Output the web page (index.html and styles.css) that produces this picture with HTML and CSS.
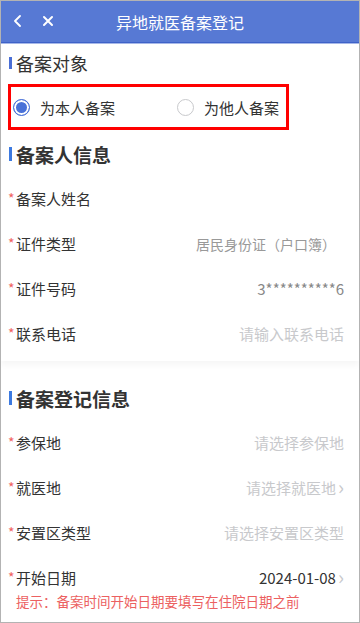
FILE: index.html
```html
<!DOCTYPE html>
<html lang="zh-CN">
<head>
    <meta charset="UTF-8">
    <meta name="viewport" content="width=device-width, initial-scale=1.0">
    <title>异地就医备案登记</title>
    <link rel="stylesheet" href="styles.css">
</head>
<body>
    <div class="page">
        <div class="nav-bar">
            <div class="nav-icons">
                <svg class="nav-icon" width="10" height="12" viewBox="0 0 10 12">
                    <path d="M7 1 L2 6 L7 11" fill="none" stroke="#fff" stroke-width="1.8" stroke-linecap="round" stroke-linejoin="round"/>
                </svg>
                <svg class="nav-icon" width="12" height="12" viewBox="0 0 12 12">
                    <path d="M2 2 L10 10 M10 2 L2 10" fill="none" stroke="#fff" stroke-width="2" stroke-linecap="round"/>
                </svg>
            </div>
            <div class="nav-title">异地就医备案登记</div>
        </div>

        <!-- 备案对象 -->
        <div class="section-title light">备案对象</div>
        <div class="radio-group">
            <label class="radio checked"><span class="radio-dot"></span>为本人备案</label>
            <label class="radio"><span class="radio-dot"></span>为他人备案</label>
        </div>

        <!-- 备案人信息 -->
        <div class="card">
            <div class="section-title">备案人信息</div>
            <div class="row">
                <div class="label"><i>*</i>备案人姓名</div>
                <div class="value"></div>
            </div>
            <div class="row">
                <div class="label"><i>*</i>证件类型</div>
                <div class="value small">居民身份证（户口簿）<span class="arrow hidden">›</span></div>
            </div>
            <div class="row">
                <div class="label"><i>*</i>证件号码</div>
                <div class="value">3**********6</div>
            </div>
            <div class="row">
                <div class="label"><i>*</i>联系电话</div>
                <div class="value placeholder">请输入联系电话</div>
            </div>
        </div>

        <!-- 备案登记信息 -->
        <div class="section-title">备案登记信息</div>
        <div class="row">
            <div class="label"><i>*</i>参保地</div>
            <div class="value placeholder">请选择参保地</div>
        </div>
        <div class="row">
            <div class="label"><i>*</i>就医地</div>
            <div class="value placeholder">请选择就医地<span class="arrow">›</span></div>
        </div>
        <div class="row">
            <div class="label"><i>*</i>安置区类型</div>
            <div class="value placeholder">请选择安置区类型</div>
        </div>
        <div class="row">
            <div class="label"><i>*</i>开始日期</div>
            <div class="value dark">2024-01-08<span class="arrow">›</span></div>
        </div>
        <div class="hint">提示：备案时间开始日期要填写在住院日期之前</div>
    </div>
</body>
</html>
```

FILE: styles.css
```css
* {
    box-sizing: border-box;
}

body {
    margin: 0;
    font-family: "Noto Sans CJK SC", "Noto Sans", sans-serif;
    color: #333;
    background-color: #fff;
}

.page {
    width: 360px;
    height: 623px;
    border: 1px solid #b3b3b3;
    overflow: hidden;
    background-color: #fff;
}

.nav-bar {
    position: relative;
    height: 42px;
    background-color: #5779d4;
    border-bottom: 1px solid #3e62c8;
    box-shadow: 0 1px 0 #a7b8e8;
    display: flex;
    align-items: center;
    justify-content: center;
}

.nav-icons {
    position: absolute;
    left: 12px;
    top: 0;
    height: 40px;
    display: flex;
    align-items: center;
    gap: 19px;
}

.nav-icon {
    display: block;
}

.nav-title {
    color: #fff;
    font-size: 16px;
}

.section-title {
    height: 44px;
    display: flex;
    align-items: center;
    padding-left: 15px;
    position: relative;
    font-size: 19px;
    font-weight: bold;
    color: #333;
}

.section-title::before {
    content: "";
    position: absolute;
    left: 8px;
    top: 15px;
    width: 2.5px;
    height: 14px;
    background-color: #3d7ae0;
}

.section-title.light {
    height: 40px;
    font-size: 18px;
    font-weight: normal;
}

.section-title.light::before {
    top: 14px;
    height: 12px;
    background-color: #4a6fd6;
}

.radio-group {
    margin: 1px 0 0 7px;
    width: 281px;
    height: 46px;
    border: 3px solid #f00;
    display: flex;
    align-items: center;
    padding-left: 2px;
}

.radio {
    display: flex;
    align-items: center;
    flex-shrink: 0;
    font-size: 15px;
    color: #333;
}

.radio.checked {
    width: 164px;
}

.radio-dot {
    width: 17px;
    height: 17px;
    border-radius: 50%;
    border: 1px solid #c8c9cc;
    margin-right: 10px;
}

.radio.checked .radio-dot {
    border: 1.5px solid #4a72d8;
    background-color: #4a72d8;
    box-shadow: inset 0 0 0 2px #fff;
}

.card {
    margin-top: 2px;
    padding-bottom: 5px;
    box-shadow: 0 4px 6px rgba(0, 0, 0, 0.04);
    margin-bottom: 15px;
}

.row {
    height: 45px;
    display: flex;
    align-items: center;
    justify-content: space-between;
    padding: 0 15px 0 7px;
}

.label {
    font-size: 15px;
    color: #333;
    display: flex;
    align-items: center;
}

.label i {
    font-style: normal;
    color: #f0625f;
    font-size: 14px;
    width: 8px;
    margin-top: -2px;
}

.value {
    font-size: 15px;
    color: #888;
    display: flex;
    align-items: center;
}

.value.small {
    font-size: 14px;
    color: #999;
}

.value.placeholder {
    color: #c8c9cc;
}

.value.dark {
    color: #333;
}

.arrow {
    color: #c8c9cc;
    font-size: 20px;
    line-height: 1;
    margin-left: 2px;
    margin-top: -2px;
}

.arrow.hidden {
    visibility: hidden;
}

.hint {
    margin-top: -8px;
    padding-left: 15px;
    font-size: 13.5px;
    color: #ec6161;
    line-height: 18px;
}
```
